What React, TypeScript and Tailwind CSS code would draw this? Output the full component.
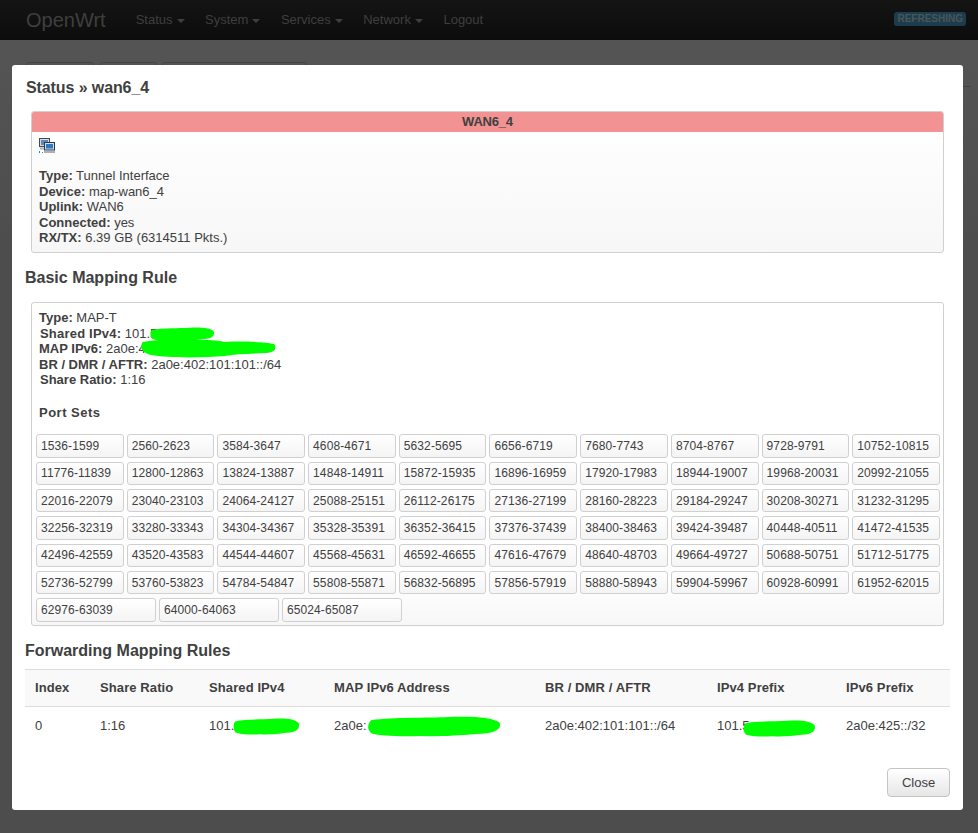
const navItems = ["Status", "System", "Services", "Network"];

const statusLines = [
  ["Type:", "Tunnel Interface"],
  ["Device:", "map-wan6_4"],
  ["Uplink:", "WAN6"],
  ["Connected:", "yes"],
  ["RX/TX:", "6.39 GB (6314511 Pkts.)"],
];

const ports = Array.from({ length: 63 }, (_, i) => {
  const start = 1536 + i * 1024;
  return `${start}-${start + 63}`;
});

const columns = [
  "w-[65px]",
  "w-[109px]",
  "w-[125px]",
  "w-[211px]",
  "w-[172px]",
  "w-[129px]",
  "w-[114px]",
];

function Scribble({ d, className }: { d: string; className: string }) {
  return (
    <svg className={`absolute ${className}`} viewBox="0 0 100 20" preserveAspectRatio="none">
      <path d={d} fill="#00ff00" />
    </svg>
  );
}

const blob = "M3 4 C20 1 45 2 60 1 C78 0 92 1 98 6 C100 11 97 16 85 17 C70 18 60 20 40 19 C25 20 10 19 4 17 C0 14 0 8 3 4 Z";
const tailBlob = "M2 4 C20 0 50 1 62 4 C75 3 92 4 98 6 C100 10 99 14 92 15 C80 16 70 16 62 18 C45 20 20 20 8 17 C0 14 0 8 2 4 Z";

function TunnelIcon() {
  return (
    <svg width="16" height="16" viewBox="0 0 16 16" className="block">
      <rect x="0.5" y="0.5" width="10" height="8" fill="#d5dbe2" stroke="#3c4a5a" />
      <rect x="2" y="2" width="7" height="5" fill="#5d8ab5" />
      <rect x="1" y="9.5" width="4" height="2" fill="#a9b0b8" />
      <rect x="5.5" y="4.5" width="10" height="7.5" fill="#d5dbe2" stroke="#26384e" />
      <rect x="7" y="6" width="7" height="4.5" fill="#2b79c2" />
      <rect x="5" y="13" width="11" height="2" fill="#a9b0b8" />
      <rect x="0" y="13" width="1" height="2" fill="#3a7bd5" />
      <rect x="3" y="14" width="1" height="1" fill="#3a7bd5" />
    </svg>
  );
}

export default function App() {
  return (
    <div className="relative h-[833px] w-[978px] overflow-hidden bg-[linear-gradient(#565656,#4d4d4d_30%)] font-['Liberation_Sans',Arial,sans-serif] text-[13px] text-[#404040]">
      <nav className="flex h-10 items-center bg-[linear-gradient(#141414,#0c0c0c)] pl-[26px] text-[#3f3f3f]">
        <span className="text-[20px] leading-none">OpenWrt</span>
        <ul className="ml-[30px] flex items-center gap-[20.5px]">
          {navItems.map((item) => (
            <li key={item} className="flex items-center gap-[4px]">
              {item}
              <span className="mt-[1px] border-x-[4px] border-t-[4px] border-x-transparent border-t-[#3f3f3f]" />
            </li>
          ))}
          <li>Logout</li>
        </ul>
        <span className="absolute right-[12px] top-[12px] rounded-[3px] bg-[#1d3d4c] px-[3px] py-[1px] text-[10px] font-bold leading-[12px] text-[#4a565c]">
          REFRESHING
        </span>
      </nav>

      <div className="absolute left-[26px] top-[62px] h-1 w-[68px] rounded-t-[3px] border border-[#444]" />
      <div className="absolute left-[100px] top-[62px] h-1 w-[57px] rounded-t-[3px] border border-[#444]" />
      <div className="absolute left-[162px] top-[62px] h-1 w-[145px] rounded-t-[3px] border border-[#444]" />
      <div className="absolute left-[963px] top-[86px] h-px w-[8px] bg-[#444]" />

      <div className="absolute left-[12px] top-[65px] flex h-[745px] w-[951px] flex-col rounded-[3px] bg-white px-[13px]">
        <h4 className="ml-px mt-[14px] text-[16px] font-bold leading-[18px] tracking-[-0.1px]">Status » wan6_4</h4>

        <section className="mx-[6px] mt-[14px] h-[142px] rounded-[3px] border border-[#d0d0d0] bg-[linear-gradient(#ffffff,#f7f7f7)]">
          <div className="flex h-5 items-center justify-center rounded-t-[2px] bg-[#f29292] font-bold tracking-[-0.2px]">
            WAN6_4
          </div>
          <div className="px-[7px] pt-[6px]">
            <TunnelIcon />
            <div className="mt-[14px] leading-[15.6px]">
              {statusLines.map(([label, value]) => (
                <div key={label}>
                  <b>{label}</b> {value}
                </div>
              ))}
            </div>
          </div>
        </section>

        <h4 className="mt-[16px] text-[16px] font-bold leading-[18px]">Basic Mapping Rule</h4>

        <section className="mx-[6px] mt-[15px] h-[324px] rounded-[3px] border border-[#d0d0d0] bg-[linear-gradient(#ffffff_85%,#f7f7f7)] pl-[4px] pr-[3px] pt-[7px]">
          <div className="relative pl-[3px] leading-[15.6px]">
            <div><b>Type:</b> MAP-T</div>
            <div className="pl-px"><b className="tracking-[0.2px]">Shared IPv4:</b> 101.5</div>
            <div><b>MAP IPv6:</b> 2a0e:4</div>
            <div><b>BR / DMR / AFTR:</b> 2a0e:402:101:101::/64</div>
            <div className="pl-px"><b>Share Ratio:</b> 1:16</div>
            <Scribble d={blob} className="left-[114px] top-[17px] h-[14px] w-[65px]" />
            <Scribble d={tailBlob} className="left-[104px] top-[28px] h-[20px] w-[137px]" />
          </div>
          <h5 className="ml-[3px] mt-[15px] font-bold tracking-[0.5px]">Port Sets</h5>
          <div className="mt-[12px] grid grid-cols-10 gap-x-[3px] gap-y-[4px] text-[12px] tracking-[0.1px]">
            {ports.slice(0, 60).map((port) => (
              <div key={port} className="flex h-[23.33px] items-center rounded-[3px] border border-[#d0d0d0] bg-[linear-gradient(#ffffff,#f4f4f4)] px-[4px]">
                {port}
              </div>
            ))}
          </div>
          <div className="mt-[4px] flex gap-[3px] text-[12px] tracking-[0.1px]">
            {ports.slice(60).map((port) => (
              <div key={port} className="flex h-[23.33px] w-[120px] items-center rounded-[3px] border border-[#d0d0d0] bg-[linear-gradient(#ffffff,#f4f4f4)] px-[4px]">
                {port}
              </div>
            ))}
          </div>
        </section>

        <h4 className="mt-[16px] text-[16px] font-bold leading-[18px]">Forwarding Mapping Rules</h4>

        <table className="mt-[9px] w-[925px] table-fixed">
          <thead>
            <tr className="h-[37px] border-y border-[#dddddd] bg-[#f9f9f9] text-left tracking-[0.1px]">
              {["Index", "Share Ratio", "Shared IPv4", "MAP IPv6 Address", "BR / DMR / AFTR", "IPv4 Prefix", "IPv6 Prefix"].map((h, i) => (
                <th key={h} className={`${columns[i]} px-[10px] font-bold`}>{h}</th>
              ))}
            </tr>
          </thead>
          <tbody>
            <tr className="h-[38px]">
              <td className="px-[10px]">0</td>
              <td className="px-[10px]">1:16</td>
              <td className="relative px-[10px]">101.<Scribble d={blob} className="left-[34px] top-[11px] h-[17px] w-[67px]" /></td>
              <td className="relative px-[10px]">2a0e:<Scribble d={blob} className="left-[43px] top-[9px] h-[21px] w-[135px]" /></td>
              <td className="px-[10px]">2a0e:402:101:101::/64</td>
              <td className="relative px-[10px]">101.5<Scribble d={blob} className="left-[36px] top-[13px] h-[17px] w-[73px]" /></td>
              <td className="px-[10px]">2a0e:425::/32</td>
            </tr>
          </tbody>
        </table>

        <div className="mb-[13px] mt-auto flex justify-end">
          <button className="h-[29px] w-[63px] rounded-[4px] border border-[#c4c4c4] bg-[linear-gradient(#ffffff,#e6e6e6)]">
            Close
          </button>
        </div>
      </div>
    </div>
  );
}
